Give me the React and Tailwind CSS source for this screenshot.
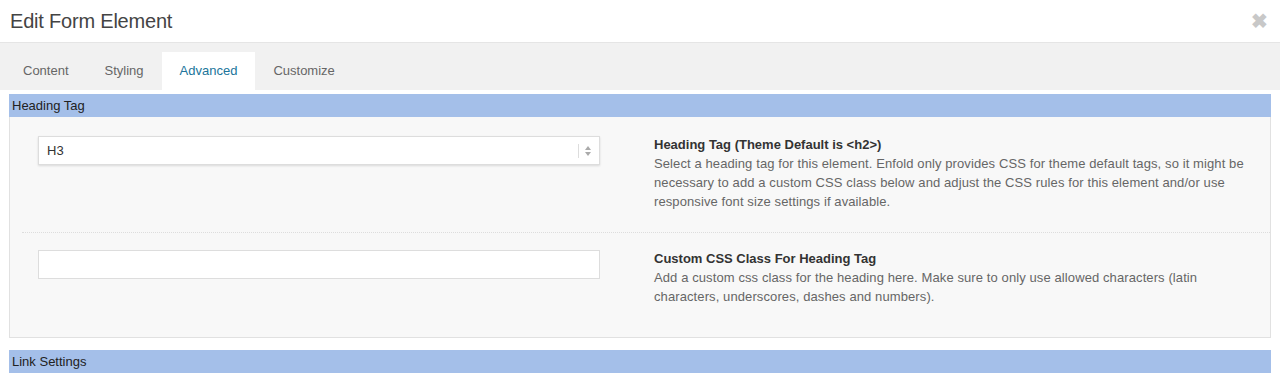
import React, { useState } from "react";

const tabs = ["Content", "Styling", "Advanced", "Customize"];

function Section({ title, children }) {
  return (
    <div className="mx-[9px]">
      <div className="bg-[#a4bfe9] h-[23px] px-[3px] flex items-center text-[13px] text-[#222]">
        {title}
      </div>
      {children}
    </div>
  );
}

function Row({ field, label, text, pt, pb }) {
  return (
    <div className={"flex " + pt + " " + pb}>
      <div className="w-[644px] pl-[28px] pr-[54px] shrink-0">{field}</div>
      <div className="flex-1 pr-[20px] -mt-[1px]">
        <div className="text-[13px] font-bold text-[#333] leading-[19px]">{label}</div>
        <div className="text-[13px] text-[#666] leading-[19px] tracking-[0.1px]">{text}</div>
      </div>
    </div>
  );
}

export default function App() {
  const [active, setActive] = useState("Advanced");
  const [tag, setTag] = useState("H3");
  const [cls, setCls] = useState("");

  return (
    <div className="w-[1280px] h-[375px] overflow-hidden bg-white font-['Liberation_Sans',Arial,sans-serif]">
      <div className="h-[43px] flex items-center justify-between px-[10px] border-b border-[#e5e5e5]">
        <h1 className="text-[20px] font-light text-[#444] tracking-[-0.2px]">Edit Form Element</h1>
        <span className="text-[#c8c8c8] text-[20px] font-bold leading-none mr-[2px]">✖</span>
      </div>

      <div className="bg-[#f1f1f1] h-[47px] flex items-end pl-[5px]">
        {tabs.map(t => (
          <button
            key={t}
            onClick={() => setActive(t)}
            className={
              "h-[38px] px-[18px] text-[13px] " +
              (active === t ? "bg-white text-[#21759b]" : "text-[#666]")
            }
          >
            {t}
          </button>
        ))}
      </div>

      <div className="pt-[4px]">
        <Section title="Heading Tag">
          <div className="bg-[#f8f8f8] border border-t-0 border-[#e1e1e1]">
            <Row
              pt="pt-[19px]"
              pb="pb-[21px]"
              field={
                <div className="relative h-[29px] bg-white border border-[#ddd] shadow-[0_1px_2px_rgba(0,0,0,0.12)]">
                  <select
                    value={tag}
                    onChange={e => setTag(e.target.value)}
                    className="appearance-none w-full h-full bg-transparent pl-[8px] text-[13px] text-[#333] outline-none"
                  >
                    {["H1", "H2", "H3", "H4", "H5", "H6"].map(h => <option key={h}>{h}</option>)}
                  </select>
                  <div className="absolute right-[8px] top-[5px] bottom-[5px] flex items-center gap-[6px] pointer-events-none">
                    <div className="w-px h-[14px] bg-[#ddd]" />
                    <div className="flex flex-col items-center gap-[2px]">
                      <svg width="6" height="4" viewBox="0 0 6 4"><path d="M0 4 L3 0 L6 4Z" fill="#aaa" /></svg>
                      <svg width="6" height="4" viewBox="0 0 6 4"><path d="M0 0 L3 4 L6 0Z" fill="#aaa" /></svg>
                    </div>
                  </div>
                </div>
              }
              label="Heading Tag (Theme Default is <h2>)"
              text="Select a heading tag for this element. Enfold only provides CSS for theme default tags, so it might be necessary to add a custom CSS class below and adjust the CSS rules for this element and/or use responsive font size settings if available."
            />
            <div className="ml-[12px] border-t border-dotted border-[#ddd]" />
            <Row
              pt="pt-[17px]"
              pb="pb-[31px]"
              field={
                <input
                  value={cls}
                  onChange={e => setCls(e.target.value)}
                  className="w-full h-[29px] bg-white border border-[#ddd] px-[8px] text-[13px] outline-none"
                />
              }
              label="Custom CSS Class For Heading Tag"
              text="Add a custom css class for the heading here. Make sure to only use allowed characters (latin characters, underscores, dashes and numbers)."
            />
          </div>
        </Section>
        <div className="h-[12px]" />
        <Section title="Link Settings" />
      </div>
    </div>
  );
}
